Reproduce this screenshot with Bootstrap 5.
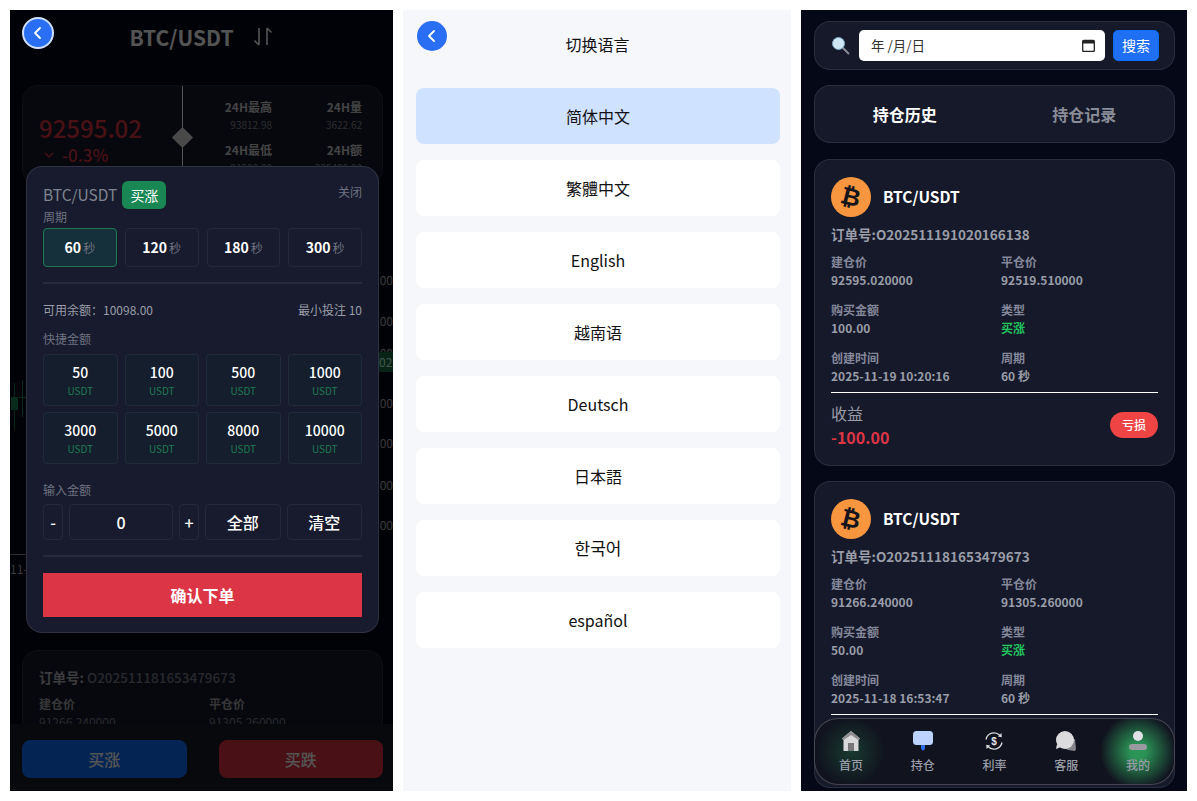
<!DOCTYPE html>
<html lang="zh-CN">
<head>
  <meta charset="UTF-8">
  <title>BTC/USDT</title>
  <meta name="viewport" content="width=device-width, initial-scale=1.0">
  <link rel="stylesheet" href="https://cdn.jsdelivr.net/npm/bootstrap@5.3.0/dist/css/bootstrap.min.css">
  <style>
    html, body { height: 100%; }
    body {
      background: #fff;
      font-family: "Noto Sans CJK SC", "Noto Sans", sans-serif;
      overflow: hidden;
    }
    .screens { padding: 10px; gap: 10px; height: 801px; }
    .phone { height: 781px; overflow: hidden; position: relative; flex: none; }
    .phone-trade { width: 383px; background: #050816; color: #fff; }
    .phone-lang { width: 388px; background: #f5f7fb; }
    .phone-orders { width: 386px; background: #050816; color: #fff; padding: 11px 12px 0 13px; }

    /* back button */
    .back-btn {
      display: flex; align-items: center; justify-content: center;
      background: #2a6ff3; border-radius: 50%; border: 0; padding: 0;
    }
    .back-trade { width: 32px; height: 32px; border: 2px solid #cfe0ff; position: absolute; left: 12px; top: 7px; }
    .back-lang { width: 30px; height: 30px; position: absolute; left: 14px; top: 11px; }

    /* trade screen, underneath */
    .trade-head { height: 75px; padding-top: 12px; font-size: 21px; font-weight: 700; line-height: 30px; gap: 18px; }
    .stats-box {
      margin: 0 10px 0 12px; height: 100px; background: #151929; border: 1px solid rgba(255,255,255,.08);
      border-radius: 16px; position: relative; padding: 0 20px 0 16px;
    }
    .stats-price { width: 123px; padding-top: 27px; color: #dc3545; }
    .price-big { font-size: 24px; font-weight: 500; line-height: 30px; }
    .price-pct { font-size: 17px; font-weight: 500; line-height: 24px; padding-left: 5px; }
    .stats-mid { position: absolute; left: 159px; top: 0; bottom: 0; width: 1px; background: #fff; }
    .stats-diamond { position: absolute; left: 152px; top: 44px; width: 15px; height: 15px; background: #ddd; transform: rotate(45deg); }
    .stats-cols { font-size: 12px; text-align: right; margin-left: auto; width: 180px; padding-top: 11px; }
    .stats-cols > div { width: 90px; }
    .stats-cols b { display: block; font-weight: 700; line-height: 20px; color: #ccc; }
    .stats-cols span { display: block; font-size: 10px; line-height: 16px; color: #888; margin-bottom: 7px; }
    .chart-zone { position: absolute; left: 0; right: 0; top: 175px; height: 465px; }
    .tick { position: absolute; right: 0; font-size: 12px; color: #aaa; line-height: 16px; }
    .price-tag { position: absolute; right: 0; top: 167px; width: 14px; height: 20px; background: #146c43; color: #cfe; font-size: 12px; line-height: 20px; overflow: hidden; }
    .candle { position: absolute; background: #198754; }
    .axis-line { position: absolute; background: #888; height: 1px; }
    .time-tick { position: absolute; left: 0; top: 376px; font-size: 12px; color: #aaa; line-height: 16px; }
    .order-peek {
      position: absolute; left: 12px; right: 10px; top: 640px; height: 120px; background: #151929;
      border: 1px solid rgba(255,255,255,.08); border-radius: 16px; padding: 16px;
    }
    .peek-no { font-size: 13.5px; font-weight: 700; color: #b4b4b8; line-height: 20px; }
    .peek-no span { color: #7a7d88; font-weight: 500; }
    .peek-data { display: grid; grid-template-columns: 170px 1fr; font-size: 12px; line-height: 18px; color: #7a7d88; margin-top: 8px; }
    .peek-data b { display: block; color: #a5a5aa; }
    .trade-foot {
      position: absolute; left: 0; right: 0; bottom: 0; height: 67px; background: #1b1e2a;
      padding: 16px 10px 13px 12px; gap: 32px;
    }
    .trade-foot .btn { flex: 1; height: 38px; font-size: 16px; font-weight: 500; padding: 0; border-radius: 8px; }
    .dim-layer { position: absolute; inset: 0; background: rgba(0,0,0,.67); }

    /* order sheet */
    .sheet {
      position: absolute; left: 16px; top: 156px; width: 353px; height: 467px;
      background: #171b2d; border: 1px solid rgba(255,255,255,.1); border-radius: 16px;
      padding: 14px 16px 0;
    }
    .sheet-title { height: 28px; font-size: 15.5px; color: #7f838f; }
    .side-tag { background: #198754; color: #fff; border-radius: 6px; width: 44px; height: 28px; font-size: 14px; line-height: 28px; text-align: center; margin-left: 5px; }
    .sheet-close { font-size: 12px; color: #6e7280; line-height: 22px; margin-left: auto; align-self: flex-start; }
    .sheet-label { font-size: 12px; line-height: 16px; color: #6e7280; }
    .cell {
      background: transparent; border: 1px solid rgba(255,255,255,.06); border-radius: 4px;
      color: #fff; display: flex; align-items: center; justify-content: center; padding: 0;
    }
    .period-row { gap: 8px; margin-top: 3px; }
    .period-row .cell { flex: 1; height: 39px; font-size: 14px; font-weight: 700; }
    .period-row .cell small { font-size: 12px; font-weight: 400; color: #6e7280; margin-left: 2px; }
    .period-row .cell.is-on { background: #15303a; border-color: #1f7a52; }
    .sheet-line { height: 2px; background: #252a3d; }
    .balance-row { font-size: 12px; color: #9a9da8; line-height: 16px; margin-top: 18px; }
    .amount-grid { display: grid; grid-template-columns: repeat(4, 1fr); gap: 6px 7px; margin-top: 7px; }
    .amount-grid .cell { height: 52px; flex-direction: column; background: #141e2c; font-size: 14px; font-weight: 500; line-height: 19px; }
    .amount-grid .cell small { font-size: 10px; font-weight: 400; color: #1f7a52; line-height: 14px; margin-top: 2px; }
    .entry-row { gap: 6px; margin-top: 6px; height: 36px; }
    .entry-row .cell { font-size: 16px; font-weight: 500; height: 36px; }
    .entry-step { width: 20px; }
    .entry-field { width: 104px; }
    .entry-act { flex: 1; }
    .confirm-btn { display: block; width: 100%; height: 44px; background: #dc3545; border: 0; border-radius: 0; color: #fff; font-size: 16px; font-weight: 700; margin-top: 16px; padding: 0; }

    /* language screen */
    .lang-head { height: 70px; padding-top: 20px; padding-left: 1px; font-size: 16px; line-height: 28px; color: #111; }
    .lang-list { padding: 8px 11px 0 13px; gap: 16px; }
    .lang-item { height: 56px; background: #fff; border-radius: 8px; font-size: 16px; color: #111; display: flex; align-items: center; justify-content: center; }
    .lang-item.is-on { background: #cfe2ff; }
    .lang-hangul { font-size: 17px; }

    /* orders screen */
    .panel-box { background: #151929; border: 1px solid rgba(255,255,255,.09); border-radius: 16px; }
    .search-box { height: 49px; padding: 0 15px 0 16px; gap: 8px; }
    .date-box { flex: 1; height: 31px; background: #fff; border-radius: 5px; padding: 0 10px 0 12px; color: #333; font-size: 13.5px; }
    .search-btn { width: 46px; height: 31px; padding: 0; font-size: 14px; border-radius: 5px; background: #1f6ff5; }
    .tab-box { height: 58px; margin-top: 15px; font-size: 16px; font-weight: 700; }
    .tab-box > div { flex: 1; text-align: center; color: #8a8d98; }
    .tab-box > div.is-on { color: #fff; }
    .order-box { height: 307px; margin-top: 16px; padding: 17px 16px 0; }
    .order-box + .order-box { margin-top: 15px; }
    .coin-head { gap: 12px; height: 40px; font-size: 15.5px; font-weight: 700; }
    .coin-mark { width: 40px; height: 40px; border-radius: 50%; background: #f7963f; display: flex; align-items: center; justify-content: center; }
    .coin-glyph { color: #14141c; font-family: "DejaVu Sans", sans-serif; font-size: 24px; font-weight: 700; line-height: 1; transform: rotate(14deg); }
    .order-no { font-size: 13.5px; font-weight: 700; color: #9a9da8; line-height: 20px; margin-top: 7px; }
    .order-data { display: grid; grid-template-columns: 170px 1fr; margin-top: 9px; }
    .order-data > div { height: 48px; font-size: 12px; line-height: 18px; color: #9a9da8; }
    .order-data b { display: block; font-weight: 700; color: #85889a; }
    .order-data span { display: block; font-weight: 700; }
    .up-text { color: #22c55e; }
    .order-rule { height: 1px; background: #fff; margin-top: -5px; }
    .profit-row { margin-top: 8px; }
    .profit-label { font-size: 16px; line-height: 24px; color: #9a9da8; }
    .profit-val { font-size: 16px; line-height: 24px; font-weight: 700; color: #dc3545; }
    .loss-tag { width: 48px; height: 26px; border-radius: 13px; background: #ef4444; color: #fff; font-size: 12px; font-weight: 500; display: flex; align-items: center; justify-content: center; }
    .bottom-nav {
      position: absolute; left: 13px; right: 12px; bottom: 6px; height: 67px; background: #11131f;
      border: 1px solid rgba(255,255,255,.22); border-radius: 24px; overflow: hidden;
    }
    .nav-cell { flex: 1; display: flex; flex-direction: column; align-items: center; font-size: 12px; font-weight: 500; color: #9a9da8; padding-top: 10px; }
    .nav-cell svg { height: 24px; margin-bottom: 3px; }
    .glow-dim { background: radial-gradient(circle 34px at 50% 50%, rgba(40,140,80,.32), transparent); }
    .glow-on { background: radial-gradient(circle 38px at 50% 50%, rgba(48,170,95,.85) 20%, transparent); }
  </style>
</head>
<body>
<div class="screens d-flex">

  <!-- trade screen with open sheet -->
  <div class="phone phone-trade">
    <div class="trade-head d-flex justify-content-center">
      <span>BTC/USDT</span>
      <svg width="22" height="22" viewBox="0 0 22 22" fill="none" stroke="#fff" stroke-width="1.6" class="mt-1"><path d="M7 2v17M2.500 14.500l4.500 4.500M15 19V2m0 0 4.500 4.500"/></svg>
    </div>
    <div class="stats-box d-flex">
      <div class="stats-price">
        <div class="price-big">92595.02</div>
        <div class="price-pct d-flex align-items-center gap-2">
          <svg width="10" height="6" viewBox="0 0 10 6" fill="none" stroke="#dc3545" stroke-width="1.200"><path d="m1 1 4 4 4-4"/></svg>
          <span>-0.3%</span>
        </div>
      </div>
      <div class="stats-mid"></div>
      <div class="stats-diamond"></div>
      <div class="stats-cols d-flex">
        <div><b>24H最高</b><span>93812.98</span><b>24H最低</b><span>91500.00</span></div>
        <div><b>24H量</b><span>3622.62</span><b>24H额</b><span>335400.00</span></div>
      </div>
    </div>
    <div class="chart-zone">
      <span class="tick" style="top:87px">.00</span>
      <span class="tick" style="top:128px">.00</span>
      <span class="tick" style="top:160px">.00</span>
      <span class="tick" style="top:210px">.00</span>
      <span class="tick" style="top:250px">.00</span>
      <span class="tick" style="top:292px">.00</span>
      <span class="tick" style="top:332px">.00</span>
      <span class="price-tag">02</span>
      <i class="candle" style="left:1px;top:212px;width:7px;height:13px"></i>
      <i class="candle" style="left:4px;top:198px;width:1px;height:47px"></i>
      <i class="candle" style="left:12px;top:195px;width:1px;height:37px"></i>
      <i class="candle" style="left:9px;top:212px;width:7px;height:1px"></i>
      <i class="axis-line" style="left:0;top:369px;width:16px"></i>
      <span class="time-tick">11-</span>
    </div>
    <div class="order-peek">
      <div class="peek-no">订单号: <span>O202511181653479673</span></div>
      <div class="peek-data">
        <div><b>建仓价</b>91266.240000</div>
        <div><b>平仓价</b>91305.260000</div>
      </div>
    </div>
    <div class="trade-foot d-flex">
      <button class="btn btn-primary">买涨</button>
      <button class="btn btn-danger">买跌</button>
    </div>
    <div class="dim-layer"></div>
    <button class="back-btn back-trade" aria-label="返回">
      <svg width="12" height="14" viewBox="0 0 12 14" fill="none" stroke="#fff" stroke-width="1.800" stroke-linecap="round" stroke-linejoin="round"><path d="M8 2 3 7l5 5"/></svg>
    </button>

    <div class="sheet">
      <div class="sheet-title d-flex align-items-center">
        <span>BTC/USDT</span>
        <span class="side-tag">买涨</span>
        <span class="sheet-close">关闭</span>
      </div>
      <div class="sheet-label">周期</div>
      <div class="period-row d-flex">
        <button class="cell is-on">60<small>秒</small></button>
        <button class="cell">120<small>秒</small></button>
        <button class="cell">180<small>秒</small></button>
        <button class="cell">300<small>秒</small></button>
      </div>
      <div class="sheet-line" style="margin-top:15px"></div>
      <div class="balance-row d-flex justify-content-between">
        <span>可用余额：10098.00</span><span>最小投注 10</span>
      </div>
      <div class="sheet-label" style="margin-top:13px">快捷金额</div>
      <div class="amount-grid">
        <button class="cell">50<small>USDT</small></button>
        <button class="cell">100<small>USDT</small></button>
        <button class="cell">500<small>USDT</small></button>
        <button class="cell">1000<small>USDT</small></button>
        <button class="cell">3000<small>USDT</small></button>
        <button class="cell">5000<small>USDT</small></button>
        <button class="cell">8000<small>USDT</small></button>
        <button class="cell">10000<small>USDT</small></button>
      </div>
      <div class="sheet-label" style="margin-top:18px">输入金额</div>
      <div class="entry-row d-flex">
        <button class="cell entry-step">-</button>
        <div class="cell entry-field">0</div>
        <button class="cell entry-step">+</button>
        <button class="cell entry-act">全部</button>
        <button class="cell entry-act">清空</button>
      </div>
      <div class="sheet-line" style="margin-top:15px"></div>
      <button class="confirm-btn">确认下单</button>
    </div>
  </div>

  <!-- language screen -->
  <div class="phone phone-lang">
    <button class="back-btn back-lang" aria-label="返回">
      <svg width="12" height="14" viewBox="0 0 12 14" fill="none" stroke="#fff" stroke-width="1.800" stroke-linecap="round" stroke-linejoin="round"><path d="M8 2 3 7l5 5"/></svg>
    </button>
    <div class="lang-head text-center">切换语言</div>
    <div class="lang-list d-flex flex-column">
      <div class="lang-item is-on">简体中文</div>
      <div class="lang-item" lang="zh-TW">繁體中文</div>
      <div class="lang-item">English</div>
      <div class="lang-item">越南语</div>
      <div class="lang-item">Deutsch</div>
      <div class="lang-item" lang="ja">日本語</div>
      <div class="lang-item lang-hangul" lang="ko">한국어</div>
      <div class="lang-item">español</div>
    </div>
  </div>

  <!-- orders screen -->
  <div class="phone phone-orders">
    <div class="panel-box search-box d-flex align-items-center">
      <svg width="20" height="20" viewBox="0 0 20 20" class="flex-none"><path d="m11 11 7 7" stroke="#8a8d98" stroke-width="2"/><circle cx="7.500" cy="7.500" r="6" fill="#cfe6f5" stroke="#7fa9c4"/></svg>
      <div class="date-box d-flex align-items-center justify-content-between">
        <span>年 /月/日</span>
        <svg width="13" height="13" viewBox="0 0 13 13"><rect x=".7" y="1.500" width="11.600" height="11" rx="1" fill="none" stroke="#222" stroke-width="1.300"/><rect x=".7" y="1.500" width="11.600" height="3" fill="#222"/></svg>
      </div>
      <button class="btn btn-primary search-btn">搜索</button>
    </div>
    <div class="panel-box tab-box d-flex align-items-center">
      <div class="is-on">持仓历史</div>
      <div>持仓记录</div>
    </div>

    <div class="panel-box order-box">
      <div class="coin-head d-flex align-items-center"><span class="coin-mark"><span class="coin-glyph">₿</span></span>BTC/USDT</div>
      <div class="order-no">订单号:O202511191020166138</div>
      <div class="order-data">
        <div><b>建仓价</b><span>92595.020000</span></div>
        <div><b>平仓价</b><span>92519.510000</span></div>
        <div><b>购买金额</b><span>100.00</span></div>
        <div><b>类型</b><span class="up-text">买涨</span></div>
        <div><b>创建时间</b><span>2025-11-19 10:20:16</span></div>
        <div><b>周期</b><span>60 秒</span></div>
      </div>
      <div class="order-rule"></div>
      <div class="profit-row d-flex align-items-center justify-content-between">
        <div><div class="profit-label">收益</div><div class="profit-val">-100.00</div></div>
        <span class="loss-tag">亏损</span>
      </div>
    </div>

    <div class="panel-box order-box">
      <div class="coin-head d-flex align-items-center"><span class="coin-mark"><span class="coin-glyph">₿</span></span>BTC/USDT</div>
      <div class="order-no">订单号:O202511181653479673</div>
      <div class="order-data">
        <div><b>建仓价</b><span>91266.240000</span></div>
        <div><b>平仓价</b><span>91305.260000</span></div>
        <div><b>购买金额</b><span>50.00</span></div>
        <div><b>类型</b><span class="up-text">买涨</span></div>
        <div><b>创建时间</b><span>2025-11-18 16:53:47</span></div>
        <div><b>周期</b><span>60 秒</span></div>
      </div>
      <div class="order-rule"></div>
    </div>

    <div class="bottom-nav d-flex">
      <div class="nav-cell glow-dim">
        <svg width="22" viewBox="0 0 22 24"><path d="M11 2 2 9.500 3.500 11v11h15V11L20 9.500z" fill="#d8d8da"/><path d="M11 2 2 9.500 3.500 11 11 6l7.500 5L20 9.500z" fill="#8d8d90"/><rect x="8" y="14" width="6" height="8" fill="#77777a"/></svg>
        首页
      </div>
      <div class="nav-cell">
        <svg width="22" viewBox="0 0 22 24"><rect x="1" y="2" width="20" height="14" rx="3.500" fill="#bcd3ff"/><path d="M9 16h4v3.500L11 22l-2-2.500z" fill="#2a6ff3"/></svg>
        持仓
      </div>
      <div class="nav-cell">
        <svg width="22" viewBox="0 0 22 24" fill="none"><path d="M3 10.500A8.200 8.200 0 0 1 17 6.500M19 13.500A8.200 8.200 0 0 1 5 17.500" stroke="#d8d8dc" stroke-width="1.300"/><path d="M18.500 4l.3 4.200-4-.6zM3.500 20l-.3-4.200 4 .6z" fill="#d8d8dc"/><text x="11" y="15.500" text-anchor="middle" font-size="10" font-weight="700" fill="#e4e4e8" font-family="Liberation Sans, sans-serif">$</text></svg>
        利率
      </div>
      <div class="nav-cell">
        <svg width="22" viewBox="0 0 22 24"><path d="M8 10h12l1 10-1 2-7-1-4-2z" fill="#85858a"/><circle cx="10" cy="11" r="9" fill="#dcdcdf"/><path d="M2 15 1 20l5-2z" fill="#dcdcdf"/></svg>
        客服
      </div>
      <div class="nav-cell glow-on">
        <svg width="22" viewBox="0 0 22 24"><circle cx="11" cy="7" r="5" fill="#e2e2e6"/><rect x="2" y="15" width="18" height="6" rx="3" fill="#9a9aa0"/></svg>
        我的
      </div>
    </div>
  </div>

</div>
<script src="https://cdn.jsdelivr.net/npm/bootstrap@5.3.0/dist/js/bootstrap.bundle.min.js"></script>
</body>
</html>
